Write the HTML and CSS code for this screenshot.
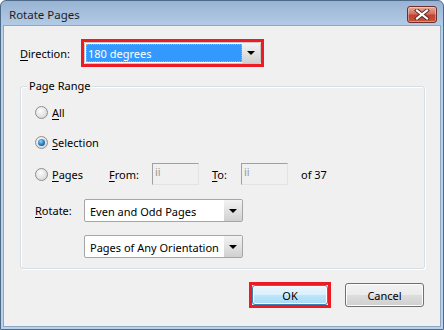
FILE: index.html
```html
<!DOCTYPE html>
<html lang="en">
<head>
    <meta charset="UTF-8">
    <title>Rotate Pages</title>
    <link rel="stylesheet" href="styles.css">
</head>
<body>
    <div class="window">
        <div class="titlebar">
            <span class="title">Rotate Pages</span>
            <span class="close-btn">
                <svg width="16" height="11" viewBox="0 0 16 11">
                    <path d="M3 1.5 L13 9.5 M13 1.5 L3 9.5" stroke="#4a2a24" stroke-width="4" stroke-linecap="square"/>
                    <path d="M3 1.5 L13 9.5 M13 1.5 L3 9.5" stroke="#fff" stroke-width="2.2" stroke-linecap="square"/>
                </svg>
            </span>
        </div>

        <div class="client">
            <div class="direction-row">
                <span class="label-direction"><u>D</u>irection:</span>
                <div class="highlight">
                    <div class="combo focused">
                        <span class="combo-text"><span class="focus-ring">180 degrees</span></span>
                        <span class="combo-btn"><i class="arrow"></i></span>
                    </div>
                </div>
            </div>

            <div class="groupbox">
                <span class="legend">Page Range</span>

                <div class="row row-all">
                    <span class="radio"></span>
                    <span class="radio-label"><u>A</u>ll</span>
                </div>

                <div class="row row-sel">
                    <span class="radio checked"></span>
                    <span class="radio-label"><u>S</u>election</span>
                </div>

                <div class="row row-pages">
                    <div class="radio-item">
                        <span class="radio"></span>
                        <span class="radio-label"><u>P</u>ages</span>
                    </div>
                    <span class="from-label"><u>F</u>rom:</span>
                    <span class="textbox">ii</span>
                    <span class="to-label"><u>T</u>o:</span>
                    <span class="textbox">ii</span>
                    <span class="of-label">of 37</span>
                </div>

                <div class="row row-rotate">
                    <span class="rotate-label"><u>R</u>otate:</span>
                    <div class="combo">
                        <span class="combo-text">Even and Odd Pages</span>
                        <span class="combo-btn"><i class="arrow"></i></span>
                    </div>
                </div>

                <div class="row row-orient">
                    <div class="combo">
                        <span class="combo-text">Pages of Any Orientation</span>
                        <span class="combo-btn"><i class="arrow"></i></span>
                    </div>
                </div>
            </div>

            <div class="buttons">
                <div class="highlight ok-wrap">
                    <span class="button default">OK</span>
                </div>
                <span class="button cancel">Cancel</span>
            </div>
        </div>
    </div>
</body>
</html>
```

FILE: styles.css
```css
* {
    margin: 0;
    padding: 0;
    box-sizing: border-box;
}

body {
    font-family: "Segoe UI", "Noto Sans", sans-serif;
    font-size: 11px;
    color: #000;
    background: #fff;
}

u {
    text-decoration: underline;
    text-underline-offset: 2px;
}

.window {
    width: 444px;
    height: 330px;
    border: 1px solid #4f6a88;
    border-radius: 6px 6px 0 0;
    background: linear-gradient(#98b3d3, #b9d1ea 30px);
    padding: 0 2px 2px;
    display: flex;
    flex-direction: column;
}

.titlebar {
    height: 24px;
    display: flex;
    align-items: center;
    justify-content: space-between;
    padding: 0 4px 0 6px;
}

.title {
    font-size: 11.5px;
    color: #1e1e1e;
    margin-top: 3px;
}

.close-btn {
    width: 30px;
    height: 17px;
    margin-top: 2px;
    border: 1px solid #6d2f28;
    border-radius: 3px;
    background: linear-gradient(#e8a898, #d4705f 45%, #c1412f 55%, #c8533d);
    box-shadow: inset 0 0 0 1px rgba(255, 255, 255, 0.35);
    display: flex;
    align-items: center;
    justify-content: center;
}

.client {
    flex: 1;
    background: #f0f0f0;
    border: 1px solid #8ea6c1;
    padding: 0 0 0 16px;
}

/* direction */
.direction-row {
    display: flex;
    align-items: center;
    margin-top: 13px;
    height: 28px;
}

.label-direction {
    width: 61px;
}

.highlight {
    border: 3px solid #ed1c24;
    padding: 0;
}

.combo {
    width: 159px;
    height: 23px;
    border: 1px solid #a6a6a6;
    border-radius: 2px;
    background: #fff;
    display: flex;
    align-items: stretch;
}

.direction-row .combo {
    width: 177px;
    height: 22px;
    border-color: #c8c8c8;
}

.combo-text {
    flex: 1;
    display: flex;
    align-items: center;
    padding: 1px 0 0 5px;
    white-space: nowrap;
    overflow: hidden;
}

.combo.focused .combo-text {
    padding: 1px 0 1px 1px;
}

.focus-ring {
    flex: 1;
    height: 100%;
    background: #3399ff;
    color: #fff;
    border: 1px dotted #f0a050;
    display: flex;
    align-items: center;
    padding-left: 1px;
}

.combo-btn {
    width: 18px;
    background: linear-gradient(#f3f3f3, #e2e2e2 50%, #d0d0d0);
    display: flex;
    align-items: center;
    justify-content: center;
}

.arrow {
    width: 0;
    height: 0;
    border-left: 4px solid transparent;
    border-right: 4px solid transparent;
    border-top: 4px solid #000;
}

/* group */
.groupbox {
    position: relative;
    width: 405px;
    height: 183px;
    margin-top: 19px;
    border: 1px solid #d5dfe5;
    border-radius: 3px;
    box-shadow: 1px 1px 0 #fff, inset 1px 1px 0 #fff;
    padding: 0 0 0 14px;
}

.legend {
    position: absolute;
    left: 6px;
    top: -9px;
    padding: 0 2px;
    background: #f0f0f0;
    line-height: 16px;
}

.row {
    display: flex;
    align-items: center;
}

.row-all {
    margin-top: 15px;
    height: 20px;
}

.row-sel {
    margin-top: 10px;
    height: 20px;
}

.row-pages {
    margin-top: 11px;
    height: 22px;
}

.row-rotate {
    margin-top: 14px;
    height: 23px;
}

.row-orient {
    margin-top: 13px;
    height: 23px;
    padding-left: 49px;
}

.radio {
    width: 13px;
    height: 13px;
    border-radius: 50%;
    border: 1px solid #8f8f8f;
    background: radial-gradient(circle at 40% 35%, #fdfdfd, #dcdcdc 70%, #cfcfcf);
    margin-right: 4px;
    position: relative;
}

.radio.checked::after {
    content: "";
    position: absolute;
    left: 2px;
    top: 2px;
    width: 7px;
    height: 7px;
    border-radius: 50%;
    background: radial-gradient(circle at 40% 35%, #8fd3ff, #1a6fb5 60%, #0d4f86);
}

.radio-item {
    display: flex;
    align-items: center;
    width: 74px;
}

.from-label {
    width: 43px;
}

.textbox {
    width: 47px;
    height: 22px;
    background: #f0f0f0;
    border: 1px solid;
    border-color: #a0a0a0 #e3e3e3 #e3e3e3 #a0a0a0;
    color: #999;
    font-size: 11px;
    line-height: 15px;
    padding-left: 2px;
}

.to-label {
    margin-left: 13px;
    width: 29px;
}

.of-label {
    margin-left: 13px;
}

.rotate-label {
    width: 49px;
}

/* buttons */
.buttons {
    display: flex;
    align-items: center;
    margin-top: 13px;
    padding-left: 229px;
}

.ok-wrap {
    width: 82px;
    height: 26px;
}

.button {
    display: flex;
    align-items: center;
    justify-content: center;
    border: 1px solid #707070;
    border-radius: 3px;
    background: linear-gradient(#f2f2f2, #ebebeb 50%, #dddddd 50%, #cfcfcf);
    box-shadow: inset 0 0 0 1px #fcfcfc;
}

.button.default {
    width: 100%;
    height: 100%;
    border-color: #3c7fb1;
    background: linear-gradient(#eaf6fd, #d9f0fc 50%, #bee6fd 50%, #a7d9f5);
}

.button.cancel {
    width: 79px;
    height: 24px;
    margin-left: 14px;
}
```
